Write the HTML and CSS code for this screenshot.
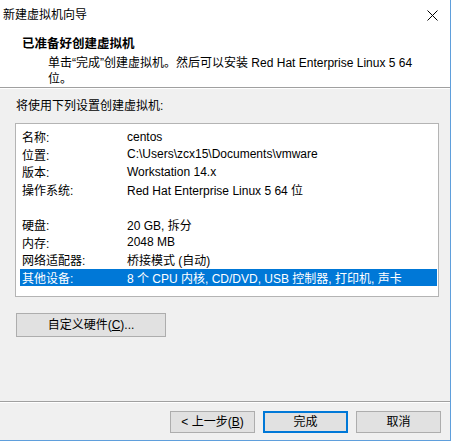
FILE: index.html
```html
<!DOCTYPE html>
<html lang="zh-CN">
<head>
<meta charset="utf-8">
<title>新建虚拟机向导</title>
<link rel="stylesheet" href="styles.css">
</head>
<body>
<div class="window">
  <div class="titlebar">
    <span class="title">新建虚拟机向导</span>
    <span class="close">
      <svg width="11" height="11" viewBox="0 0 11 11"><path d="M0.5 0.5 L10.5 10.5 M10.5 0.5 L0.5 10.5" stroke="#000" stroke-width="1" fill="none"/></svg>
    </span>
  </div>
  <div class="header">
    <div class="h-title">已准备好创建虚拟机</div>
    <div class="h-sub">单击<span class="q">“</span>完成<span class="q">”</span>创建虚拟机。然后可以安装 Red Hat Enterprise Linux 5 64<br>位。</div>
  </div>
  <div class="body">
    <div class="intro">将使用下列设置创建虚拟机:</div>
    <div class="listbox">
      <div class="row"><span class="lbl">名称:</span><span class="val">centos</span></div>
      <div class="row"><span class="lbl">位置:</span><span class="val">C:\Users\zcx15\Documents\vmware</span></div>
      <div class="row"><span class="lbl">版本:</span><span class="val">Workstation 14.x</span></div>
      <div class="row"><span class="lbl">操作系统:</span><span class="val">Red Hat Enterprise Linux 5 64 位</span></div>
      <div class="row"><span class="lbl"></span><span class="val"></span></div>
      <div class="row"><span class="lbl">硬盘:</span><span class="val">20 GB, 拆分</span></div>
      <div class="row"><span class="lbl">内存:</span><span class="val">2048 MB</span></div>
      <div class="row"><span class="lbl">网络适配器:</span><span class="val">桥接模式 (自动)</span></div>
      <div class="row selected"><span class="lbl">其他设备:</span><span class="val">8 个 CPU 内核, CD/DVD, USB 控制器, 打印机, 声卡</span></div>
    </div>
    <button class="btn custom">自定义硬件(<u>C</u>)...</button>
  </div>
  <div class="footer">
    <button class="btn">&lt; 上一步(<u>B</u>)</button>
    <button class="btn default">完成</button>
    <button class="btn">取消</button>
  </div>
</div>
</body>
</html>
```

FILE: styles.css
```css
html, body {
  margin: 0;
  padding: 0;
  background: #ffffff;
}
body {
  font-family: "Liberation Sans", "Noto Sans CJK SC", sans-serif;
  font-size: 12px;
  color: #000;
}
.window {
  width: 450px;
  height: 440px;
  border-right: 1px solid #5f9fdc;
  border-bottom: 1px solid #5f9fdc;
  display: flex;
  flex-direction: column;
  background: #f0f0f0;
}
.titlebar {
  height: 30px;
  background: #fff;
  display: flex;
  align-items: center;
  justify-content: space-between;
}
.title {
  padding-left: 3px;
  line-height: 16px;
}
.close {
  width: 11px;
  height: 11px;
  margin-right: 12px;
  display: flex;
}
.header {
  height: 57px;
  background: #fff;
  border-bottom: 1px solid #a0a0a0;
  box-sizing: content-box;
  padding: 0;
}
.h-title {
  margin-top: 6px;
  padding-left: 22px;
  font-weight: bold;
  font-size: 12.5px;
  line-height: 16px;
}
.h-sub {
  margin-top: 3px;
  padding-left: 48px;
  line-height: 16px;
}
.q {
  font-family: "Liberation Sans", sans-serif;
}
.body {
  flex: 1;
  padding: 9px 0 0 15px;
  border-top: 1px solid #fff;
  display: flex;
  flex-direction: column;
  align-items: flex-start;
}
.intro {
  line-height: 16px;
  padding-left: 1px;
}
.listbox {
  margin-top: 9px;
  background: #fff;
  border: 1px solid #b4b4b4;
  padding: 4px 1px 0 4px;
  box-sizing: border-box;
  width: 424px;
  height: 174px;
}
.row {
  display: flex;
  height: 17.6px;
  align-items: center;
  white-space: nowrap;
}
.lbl {
  width: 105px;
  padding-left: 2px;
}
.selected {
  background: #0078d7;
  color: #fff;
}
.btn {
  font-family: "Liberation Sans", "Noto Sans CJK SC", sans-serif;
  font-size: 12px;
  color: #000;
  background: #e1e1e1;
  border: 1px solid #adadad;
  border-radius: 0;
  padding: 0;
  margin: 0;
  width: 85px;
  height: 22px;
  line-height: 18px;
}
.btn u {
  text-decoration: underline;
}
.custom {
  margin-top: 16px;
  margin-left: 1px;
  width: 150px;
  height: 24px;
}
.footer {
  border-top: 1px solid #a0a0a0;
  box-shadow: inset 0 1px 0 #fff;
  display: flex;
  justify-content: flex-end;
  align-items: flex-start;
  gap: 8px;
  padding: 9px 9px 0 0;
  box-sizing: border-box;
  height: 39px;
}
.default {
  border: 2px solid #0078d7;
}
```
